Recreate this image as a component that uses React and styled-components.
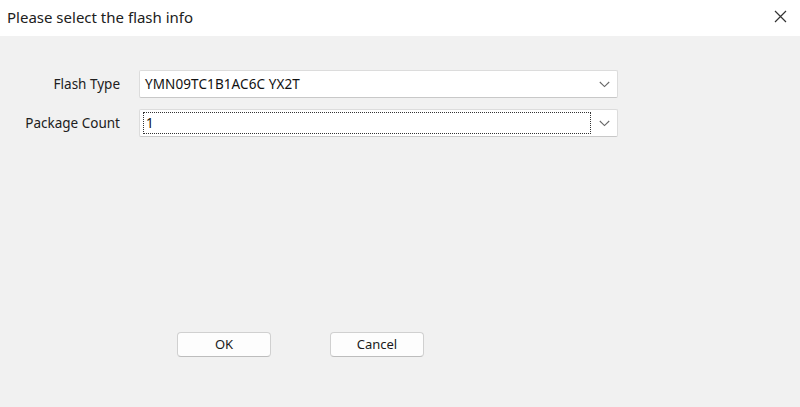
import React from "react";
import styled, { createGlobalStyle } from "styled-components";

const GlobalStyle = createGlobalStyle`
  html, body {
    margin: 0;
    padding: 0;
    background: #f0f0f0;
  }
  body {
    font-family: "Segoe UI", "Noto Sans", "Open Sans", sans-serif;
    color: #1a1a1a;
  }
`;

const Window = styled.div`
  width: 800px;
  height: 407px;
  display: flex;
  flex-direction: column;
  background: #f1f1f1;
  overflow: hidden;
`;

const TitleBar = styled.div`
  height: 36px;
  flex: none;
  display: flex;
  align-items: center;
  justify-content: space-between;
  padding: 0 10px 0 7px;
  background: #ffffff;
  box-sizing: border-box;
`;

const Title = styled.span`
  font-size: 15px;
  color: #202020;
  padding-bottom: 3px;
`;

const CloseButton = styled.button`
  width: 20px;
  height: 20px;
  padding: 0;
  border: none;
  background: transparent;
  display: flex;
  align-items: center;
  justify-content: center;
  margin-bottom: 3px;
`;

const Body = styled.div`
  flex: 1;
  display: flex;
  flex-direction: column;
  padding: 34px 0 0 0;
`;

const Form = styled.div`
  display: grid;
  grid-template-columns: 100px 479px;
  column-gap: 19px;
  row-gap: 11px;
  margin-left: 20px;
`;

const Label = styled.label`
  font-size: 13.5px;
  color: #202020;
  text-align: right;
  align-self: center;
  white-space: nowrap;
  padding-bottom: 1px;
`;

const Combo = styled.div`
  height: 28px;
  box-sizing: border-box;
  display: flex;
  align-items: stretch;
  background: #ffffff;
  border: 1px solid #dcdcdc;
  border-bottom-color: #c8c8c8;
  border-radius: 2px;
`;

const ComboValue = styled.div`
  flex: 1;
  display: flex;
  align-items: center;
  font-size: 13.5px;
  color: #111;
  padding-left: ${(p) => (p.$focused ? "2px" : "5px")};
  margin: ${(p) => (p.$focused ? "2px 0 2px 3px" : "0")};
  border: ${(p) => (p.$focused ? "1px dotted #333" : "none")};
  letter-spacing: 0.1px;
`;

const Arrow = styled.div`
  width: 26px;
  flex: none;
  display: flex;
  align-items: center;
  justify-content: center;
`;

const Buttons = styled.div`
  display: flex;
  gap: 59px;
  margin-top: 195px;
  margin-left: 177px;
`;

const Button = styled.button`
  width: 94px;
  height: 25px;
  box-sizing: border-box;
  background: #fdfdfd;
  border: 1px solid #d0d0d0;
  border-bottom-color: #bdbdbd;
  border-radius: 4px;
  font-family: inherit;
  font-size: 13px;
  color: #1a1a1a;
  padding: 0 0 1px 0;
`;

function Chevron() {
  return (
    <svg width="11" height="7" viewBox="0 0 11 7">
      <path d="M0.8 1 L5.5 5.6 L10.2 1" fill="none" stroke="#666" strokeWidth="1.1" />
    </svg>
  );
}

function CloseIcon() {
  return (
    <svg width="13" height="13" viewBox="0 0 13 13">
      <path d="M1 1 L12 12 M12 1 L1 12" stroke="#333" strokeWidth="1.2" />
    </svg>
  );
}

export default function App() {
  return (
    <>
      <GlobalStyle />
      <Window>
        <TitleBar>
          <Title>Please select the flash info</Title>
          <CloseButton>
            <CloseIcon />
          </CloseButton>
        </TitleBar>
        <Body>
          <Form>
            <Label>Flash Type</Label>
            <Combo>
              <ComboValue>YMN09TC1B1AC6C YX2T</ComboValue>
              <Arrow>
                <Chevron />
              </Arrow>
            </Combo>
            <Label>Package Count</Label>
            <Combo>
              <ComboValue $focused>1</ComboValue>
              <Arrow>
                <Chevron />
              </Arrow>
            </Combo>
          </Form>
          <Buttons>
            <Button>OK</Button>
            <Button>Cancel</Button>
          </Buttons>
        </Body>
      </Window>
    </>
  );
}
